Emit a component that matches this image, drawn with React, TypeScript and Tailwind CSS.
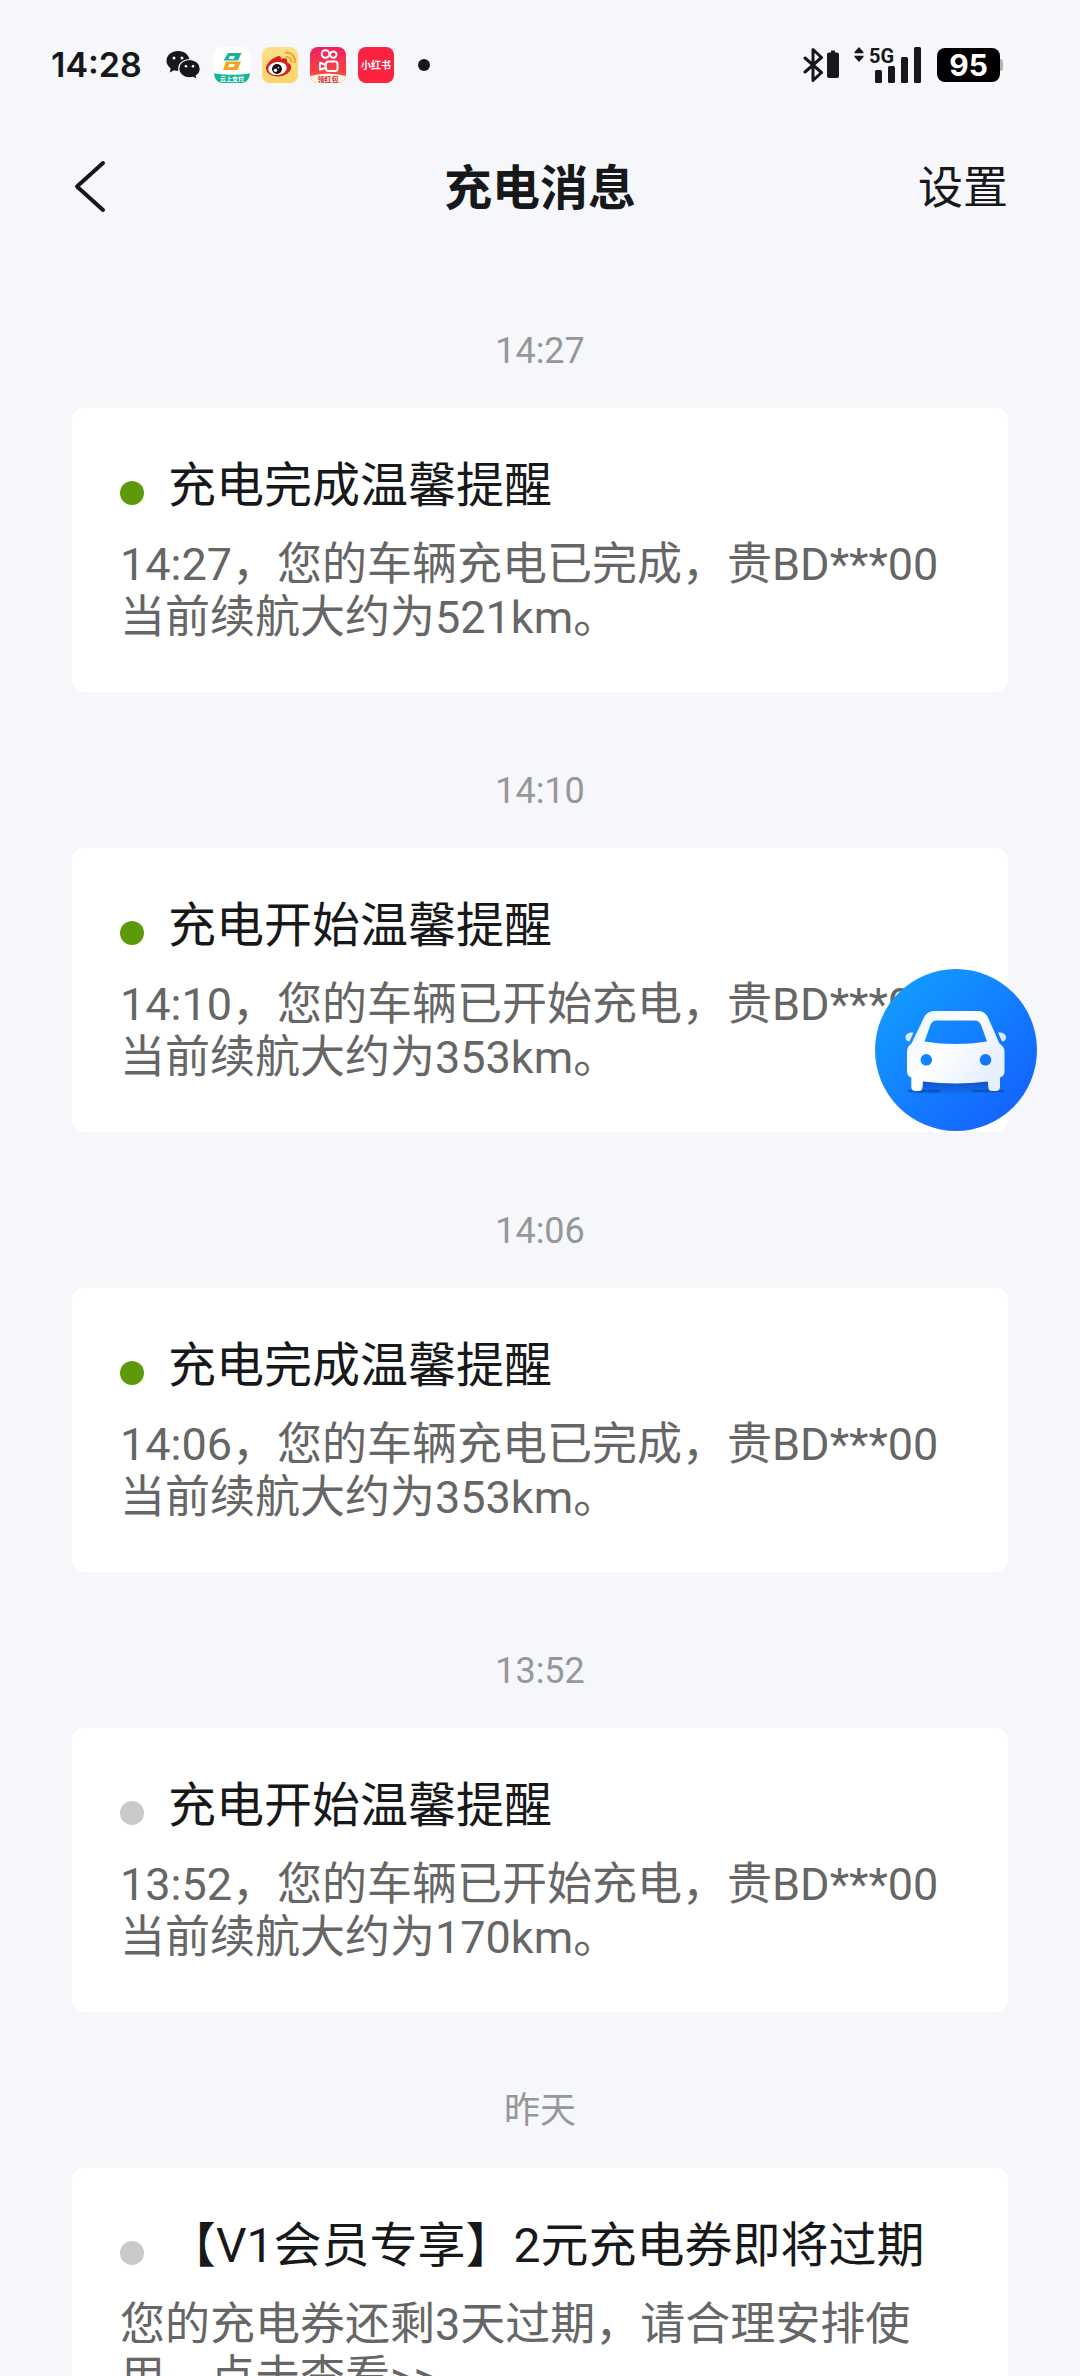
type Message = {
  time: string;
  title: string;
  body: string;
  unread: boolean;
};

const messages: Message[] = [
  { time: "14:27", title: "充电完成温馨提醒", body: "14:27，您的车辆充电已完成，贵BD***00当前续航大约为521km。", unread: true },
  { time: "14:10", title: "充电开始温馨提醒", body: "14:10，您的车辆已开始充电，贵BD***00当前续航大约为353km。", unread: true },
  { time: "14:06", title: "充电完成温馨提醒", body: "14:06，您的车辆充电已完成，贵BD***00当前续航大约为353km。", unread: true },
  { time: "13:52", title: "充电开始温馨提醒", body: "13:52，您的车辆已开始充电，贵BD***00当前续航大约为170km。", unread: false },
  { time: "昨天", title: "【V1会员专享】2元充电券即将过期", body: "您的充电券还剩3天过期，请合理安排使用，点击查看>>", unread: false },
];

function WechatIcon() {
  return (
    <svg viewBox="0 0 36 30" className="h-[30px] w-9" aria-label="微信">
      <path d="M12 1C5.400 1 0.500 5.300 0.500 10.800c0 3.100 1.600 5.800 4.200 7.600L3.800 22.500l4.300-2.300c1.300.4 2.600.5 4.200.5C18.500 20.700 23.500 16.500 23.500 10.800S18.500 1 12 1Z" fill="#17181a" />
      <path d="M23.500 9.500c-6 0-10.800 4-10.800 9.200s4.800 9.200 10.800 9.200c1.300 0 2.500-.2 3.600-.5l4.300 2.100-1.100-3.700c2.400-1.700 4-4.200 4-7.100 0-5.200-4.800-9.200-10.800-9.200Z" fill="#17181a" stroke="#f6f7fb" strokeWidth="1.200" />
      <circle cx="8" cy="8" r="1.500" fill="#f6f7fb" />
      <circle cx="16" cy="8" r="1.500" fill="#f6f7fb" />
      <circle cx="20" cy="16.200" r="1.300" fill="#f6f7fb" />
      <circle cx="27" cy="16.200" r="1.300" fill="#f6f7fb" />
    </svg>
  );
}

function PayIcon() {
  return (
    <svg viewBox="0 0 36 36" className="size-9" aria-label="支付">
      <rect width="36" height="34" rx="8" fill="#fff" />
      <path d="M14 6h13.500l-3.500 7.500H9.500Z" fill="#18b3a0" />
      <path d="M12 14.500h15l-3.500 8.500H9Z" fill="#f5a31f" />
      <path d="M16 9h5l-1.500 3h-5ZM15.500 17h5.500l-1.500 3H14Z" fill="#fff" />
      <path d="M0 26.500q18 2.500 36 0C35.500 32 32.500 36 27 36H9C3.500 36 .5 32 0 26.500Z" fill="#18b39b" />
      <text x="18" y="34" fontSize="6" fontWeight="700" fill="#fff" textAnchor="middle">云上支付</text>
    </svg>
  );
}

function WeiboIcon() {
  return (
    <svg viewBox="0 0 36 36" className="size-9" aria-label="微博">
      <defs>
        <linearGradient id="weiboBg" x1="0" y1="0" x2="0" y2="1">
          <stop offset="0" stopColor="#fbe08a" />
          <stop offset="1" stopColor="#fdd568" />
        </linearGradient>
      </defs>
      <rect width="36" height="36" rx="8" fill="url(#weiboBg)" />
      <path d="M15 9.500c3-1.500 4.500 0 3.800 2.600 3.500-1.600 7-1.200 6.200 2.200-.2.900.2 1.100 1 1.400 1.800.7 3.200 2.300 3.200 4.600 0 5-6.200 9.200-13.400 9.200C8.900 29.500 4 26 4 21.300 4 17 9.500 11.500 15 9.500Z" fill="#d8201f" />
      <ellipse cx="15.500" cy="21.500" rx="9.300" ry="6.500" fill="#fff" transform="rotate(-8 15.500 21.500)" />
      <circle cx="15" cy="22" r="5" fill="#111" />
      <circle cx="13.500" cy="23.200" r="1.700" fill="#fff" />
      <circle cx="16.500" cy="20.700" r=".8" fill="#fff" />
      <path d="M24.500 10c3-.4 5 1.800 4.500 5" fill="none" stroke="#f0a63a" strokeWidth="2" strokeLinecap="round" />
      <path d="M24 5.800c5.500-.8 9.600 3.500 8.700 9.400" fill="none" stroke="#f0a63a" strokeWidth="2.200" strokeLinecap="round" />
    </svg>
  );
}

function KuaishouIcon() {
  return (
    <svg viewBox="0 0 36 36" className="size-9" aria-label="快手">
      <defs>
        <linearGradient id="ksBg" x1="0" y1="0" x2="0" y2="1">
          <stop offset="0" stopColor="#ee1f63" />
          <stop offset="0.800" stopColor="#fb4a3c" />
        </linearGradient>
        <clipPath id="ksClip"><rect width="36" height="36" rx="8" /></clipPath>
      </defs>
      <g clipPath="url(#ksClip)">
        <rect width="36" height="36" fill="url(#ksBg)" />
        <g fill="none" stroke="#fff" strokeWidth="2" strokeLinejoin="round">
          <circle cx="15.500" cy="7" r="3.800" />
          <circle cx="23.300" cy="7.600" r="3.200" />
          <rect x="16" y="14.500" width="11.500" height="9.500" rx="2.500" />
          <path d="M10 15.700v7l5.500-2v-3Z" />
        </g>
        <path d="M0 29q18-5 36 0v7H0Z" fill="#fff3e4" />
      </g>
      <text x="18" y="35" fontSize="7" fontWeight="700" fill="#d8231f" textAnchor="middle">领红包</text>
    </svg>
  );
}

function RednoteIcon() {
  return (
    <svg viewBox="0 0 36 36" className="size-9" aria-label="小红书">
      <rect width="36" height="36" rx="8" fill="#fc2341" />
      <text x="18" y="22" fontSize="10" fontWeight="700" fill="#fff" textAnchor="middle">小红书</text>
    </svg>
  );
}

function BluetoothIcon() {
  return (
    <svg viewBox="0 0 38 36" className="h-9 w-[38px]" aria-label="蓝牙">
      <path d="M2 11 18.500 25.500 10 33.500V2.500l8.500 8L2 25" fill="none" stroke="#17181a" strokeWidth="3" strokeLinejoin="round" strokeLinecap="round" />
      <path d="M28 3.500h4v2h2a2 2 0 0 1 2 2V29a2 2 0 0 1-2 2h-8a2 2 0 0 1-2-2V7.500a2 2 0 0 1 2-2h2Z" fill="#17181a" />
    </svg>
  );
}

function SignalIcon() {
  return (
    <svg viewBox="0 0 68 38" className="h-[38px] w-[68px] overflow-visible" aria-label="信号">
      <g fill="#17181a">
        <path d="M6 1l4.500 5h-9ZM6 16l4.500-5h-9ZM1.500 6h9v1.200h-9ZM1.500 9.800h9V11h-9Z" />
        <text x="16" y="17" fontSize="20" fontWeight="700">5G</text>
        <rect x="22" y="24" width="7" height="13" rx="1.500" />
        <rect x="35" y="20" width="7" height="17" rx="1.500" />
        <rect x="48" y="11" width="7" height="26" rx="1.500" />
        <rect x="61" y="1" width="7" height="36" rx="1.500" />
      </g>
    </svg>
  );
}

function StatusBar() {
  return (
    <div className="flex h-[130px] shrink-0 items-center justify-between pr-[77px] pl-[51px]">
      <div className="flex items-center gap-3">
        <span className="mr-3 font-[Inter] text-[34px] leading-none font-semibold">14:28</span>
        <WechatIcon />
        <PayIcon />
        <WeiboIcon />
        <KuaishouIcon />
        <RednoteIcon />
        <span className="ml-3 size-3 rounded-full bg-[#17181a]" />
      </div>
      <div className="flex items-center gap-4">
        <div className="flex items-center gap-3">
          <BluetoothIcon />
          <SignalIcon />
        </div>
        <div className="flex items-center">
          <span className="flex h-[34px] w-[63px] items-center justify-center rounded-lg bg-black font-[Inter] text-[30px] leading-none font-bold text-white">95</span>
          <span className="h-3 w-[3px] rounded-r-sm bg-[#b3b4b8]" />
        </div>
      </div>
    </div>
  );
}

function Header() {
  return (
    <header className="grid h-[114px] shrink-0 grid-cols-[1fr_auto_1fr] items-center px-[72px]">
      <button type="button" aria-label="返回" className="justify-self-start">
        <svg viewBox="0 0 36 54" className="h-[54px] w-9">
          <path d="M31 3 5 26.500 31 50" fill="none" stroke="#17181a" strokeWidth="4" strokeLinejoin="round" strokeLinecap="round" />
        </svg>
      </button>
      <h1 className="pt-1 text-[48px] leading-[60px] font-bold">充电消息</h1>
      <button type="button" className="justify-self-end pt-1 text-[45px] leading-[60px]">设置</button>
    </header>
  );
}

function MessageItem({ message }: { message: Message }) {
  return (
    <li className="flex flex-col gap-9">
      <time className="text-center text-[36px] leading-[42px] text-[#969799]">{message.time}</time>
      <article className="rounded-xl bg-white p-12">
        <div className="flex items-center gap-6">
          <span className={message.unread ? "mt-3.5 size-6 rounded-full bg-[#5c9a0c]" : "mt-3.5 size-6 rounded-full bg-[#cacaca]"} />
          <h2 className="text-[48px] leading-[60px]">{message.title}</h2>
        </div>
        <p className="mt-[22px] text-[45px] leading-[53px] text-[#666666]">{message.body}</p>
      </article>
    </li>
  );
}

function CarButton() {
  return (
    <button type="button" aria-label="我的车辆" className="fixed top-[969px] right-[43px] size-[162px] rounded-full">
      <svg viewBox="0 0 162 162" className="size-full">
        <defs>
          <linearGradient id="fabBg" x1="0.100" y1="0.150" x2="0.850" y2="0.900">
            <stop offset="0" stopColor="#129bff" />
            <stop offset="1" stopColor="#1463ff" />
          </linearGradient>
          <linearGradient id="carBody" x1="0" y1="0" x2="1" y2="0.600">
            <stop offset="0" stopColor="#e6f3ff" />
            <stop offset="0.450" stopColor="#ffffff" />
            <stop offset="1" stopColor="#e6effe" />
          </linearGradient>
          <linearGradient id="carShade" x1="0" y1="0" x2="0" y2="1">
            <stop offset="0" stopColor="#0d4fc4" />
            <stop offset="1" stopColor="#1372f5" />
          </linearGradient>
        </defs>
        <circle cx="81" cy="81" r="81" fill="url(#fabBg)" />
        <path d="M42 111h78v14H42Z" fill="url(#carShade)" />
        <path d="M34 122h30M98 122h30" stroke="#0b4aa8" strokeWidth="2.500" strokeLinecap="round" opacity=".7" />
        <path
          fillRule="evenodd"
          fill="url(#carBody)"
          d="M60 42h43c5 0 8 2.500 10 6.500l11.500 26c2.500 1.500 5 4.500 5 8v20c0 3-1.500 5-4.500 6v9c0 3-1.500 4.500-4 4.500h-4c-2.500 0-3.500-1.500-3.700-4l-.5-5.500Q81 116.500 48 112.500l-.5 5.500c-.2 2.500-1.200 4-3.700 4h-3.500c-2.500 0-4-1.500-4-4.500v-9c-3-1.200-4.300-3-4.300-6v-20c0-3.500 2-6.500 4.500-8L49 48.500C51 44.500 54.500 42 60 42ZM62.500 51.500c-4 0-5.700 1.500-7 4.300L49.500 72.500q31 5 62.500 0L106 55.800c-1.300-2.800-3.300-4.300-7-4.300ZM51.300 85a5.800 5.800 0 1 0 0 11.600 5.800 5.800 0 1 0 0-11.600ZM110.500 85a5.800 5.800 0 1 0 0 11.600 5.800 5.800 0 1 0 0-11.600Z"
        />
        <path d="M38.500 63.500c-5.500-.5-8 2-8 5 0 2.200 1.500 4 4 4ZM123 63.500c5.500-.5 8 2 8 5 0 2.200-1.500 4-4 4Z" fill="#dcecff" />
      </svg>
    </button>
  );
}

export default function App() {
  return (
    <div className="flex h-screen flex-col overflow-hidden bg-[#f6f7fb] font-[Roboto,'Noto_Sans_CJK_SC',sans-serif] text-[#17181a]">
      <StatusBar />
      <Header />
      <main className="min-h-0 flex-1 overflow-hidden px-[72px] pt-[86px]">
        <ul className="flex flex-col gap-[78px]">
          {messages.map((message) => (
            <MessageItem key={message.time} message={message} />
          ))}
        </ul>
      </main>
      <CarButton />
    </div>
  );
}
